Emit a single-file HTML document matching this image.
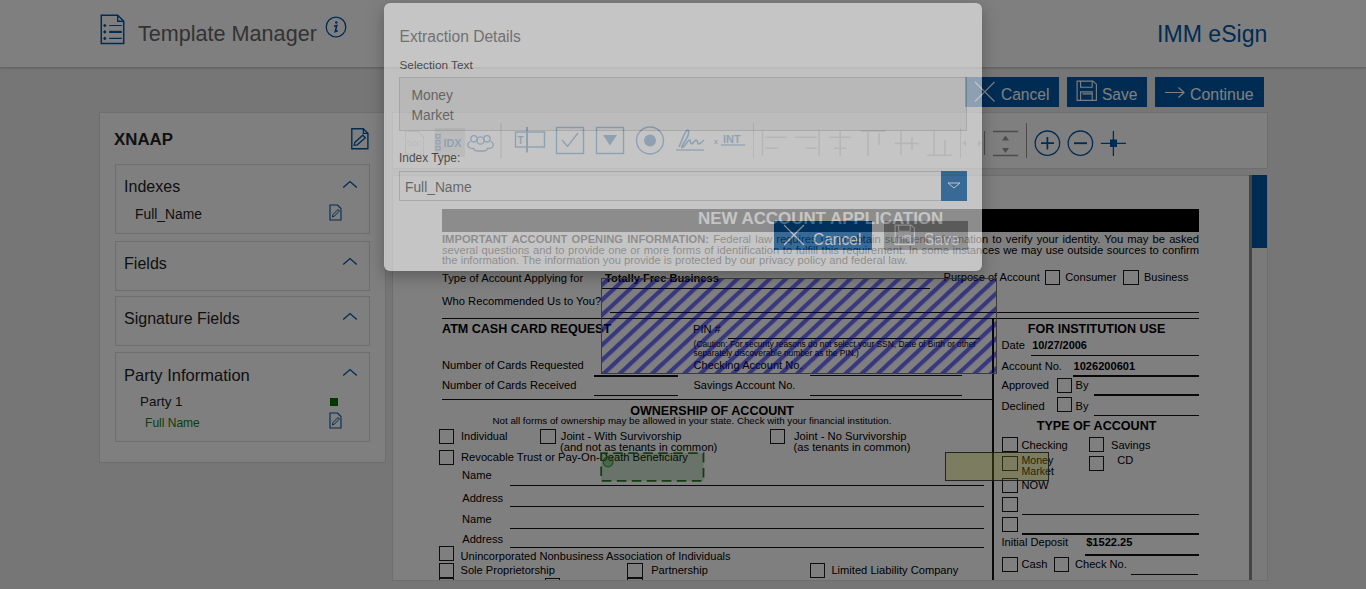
<!DOCTYPE html>
<html><head><meta charset="utf-8">
<style>
*{margin:0;padding:0;box-sizing:border-box}
html,body{width:1366px;height:589px;overflow:hidden}
body{background:#ececec;font-family:"Liberation Sans",sans-serif;position:relative}
.t{position:absolute;white-space:nowrap;line-height:1}
.r{position:absolute}
.jl{text-align:justify;text-align-last:justify;white-space:normal}
#hdr{position:absolute;left:0;top:0;width:1366px;height:67px;background:#fff;box-shadow:0 1px 2px rgba(0,0,0,.12),0 2px 1px rgba(0,0,0,.05)}
.btn{position:absolute;top:77px;height:30px;background:#0058a8}
#panel{position:absolute;left:98.6px;top:112px;width:287px;height:351px;background:#fff;border:1px solid #ddd}
.sec{position:absolute;left:15px;width:255px;border:1px solid #ddd;background:#fff}
#tb{position:absolute;left:391.5px;top:112px;width:876px;height:57px;background:#fff;border:1px solid #ddd}
#viewer{position:absolute;left:391.5px;top:175px;width:876px;height:406px;background:#fff;border:1px solid #ddd;overflow:hidden}
#doc{position:absolute;left:0;top:0;width:1366px;height:589px}
#backdrop{position:absolute;left:0;top:0;width:1366px;height:589px;background:#000;opacity:.5}
#modal{position:absolute;left:384px;top:3px;width:598px;height:267.6px;background:#fff;border-radius:6px;box-shadow:0 5px 15px rgba(0,0,0,.5);opacity:.55}
</style></head><body>
<div id="page">
  <div id="hdr">
    <svg class="r" style="left:100px;top:14px" width="26" height="32" viewBox="0 0 26 32">
      <path d="M1.3 1.3H17.7L23.7 7V29.6H1.3Z" fill="none" stroke="#0058a8" stroke-width="1.5"/>
      <path d="M17.7 1.3V7.3H23.7" fill="none" stroke="#0058a8" stroke-width="1.4"/>
      <path d="M4.8 9.7L6.6 11.5L4.8 13.3L3 11.5ZM4.8 16.1L6.6 17.9L4.8 19.7L3 17.9ZM4.8 22.6L6.6 24.4L4.8 26.2L3 24.4Z" fill="#0058a8"/>
      <path d="M9.2 11.5H21.8M9.2 24.4H21.8" stroke="#0058a8" stroke-width="1.2"/>
      <path d="M9.2 17.9H21.8" stroke="#0058a8" stroke-width="2.2"/>
    </svg>
    <div class="t" style="left:138px;top:23px;font-size:21.6px;color:#666">Template Manager</div>
    <svg class="r" style="left:325px;top:16px" width="22" height="22" viewBox="0 0 22 22">
      <circle cx="11" cy="11" r="9.8" fill="none" stroke="#0058a8" stroke-width="1.3"/>
      <circle cx="11.3" cy="6.5" r="1.2" fill="#0058a8"/>
      <path d="M9 10.2L11.8 9.6L10.2 15.5L12.8 14.8" fill="none" stroke="#0058a8" stroke-width="1.6"/>
    </svg>
    <div class="t" style="left:1157px;top:22.6px;font-size:23.1px;color:#0058a8">IMM eSign</div>
  </div>

  <div class="btn" style="left:965px;width:94px">
    <svg class="r" style="left:9.3px;top:3.6px" width="22" height="22" viewBox="0 0 22 22"><path d="M1 1L20.5 20.5M20.5 1L1 20.5" stroke="#fff" stroke-width="1.1"/></svg>
    <div class="t" style="left:35.5px;top:10.2px;font-size:16.9px;color:#fff;transform:scaleX(.92);transform-origin:0 0">Cancel</div>
  </div>
  <div class="btn" style="left:1067px;width:80px">
    <svg class="r" style="left:9px;top:3px" width="22" height="22" viewBox="0 0 22 22"><path d="M1.1 1.1H16.9L20.4 4.2V20.4H1.1Z M4.6 1.1V7.2H16.2V1.1 M4.6 20.4V11.9H16.2V20.4 M6.5 13.9H16.2" fill="none" stroke="#fff" stroke-width="1.1"/></svg>
    <div class="t" style="left:34.6px;top:10.2px;font-size:16.9px;color:#fff;transform:scaleX(.92);transform-origin:0 0">Save</div>
  </div>
  <div class="btn" style="left:1155px;width:109px">
    <svg class="r" style="left:9px;top:8px" width="22" height="14" viewBox="0 0 22 14"><path d="M1 7.5H20M14.5 2.5L20 7.5L14.5 12.5" fill="none" stroke="#fff" stroke-width="1.2"/></svg>
    <div class="t" style="left:35px;top:10.2px;font-size:16.9px;color:#fff;transform:scaleX(.94);transform-origin:0 0">Continue</div>
  </div>

  <div id="panel">
    <div class="t" style="left:14.5px;top:19px;font-size:16.8px;font-weight:700;color:#222">XNAAP</div>
    <svg class="r" style="left:250px;top:14px" width="20" height="24" viewBox="0 0 20 24">
      <path d="M1.8 1.7H13.3L17.9 6.3V21.7H1.8Z" fill="none" stroke="#0058a8" stroke-width="1.4"/>
      <path d="M13.3 1.7V6.3H17.9" fill="none" stroke="#0058a8" stroke-width="1.2"/>
      <path d="M4.2 18.3L4.8 15.4L12.8 8.2L15.3 10.7L7.3 17.8Z" fill="none" stroke="#0058a8" stroke-width="1.3"/>
    </svg>
    <div class="sec" style="top:51.4px;height:70px">
      <div class="t" style="left:8.5px;top:14px;font-size:16px;color:#222">Indexes</div>
      <svg class="r" style="left:226px;top:15px" width="16" height="9" viewBox="0 0 16 9"><path d="M1.2 7.6L8 1.6L14.8 7.6" fill="none" stroke="#0058a8" stroke-width="1.4"/></svg>
      <div class="t" style="left:19.5px;top:42.5px;font-size:13.8px;color:#222">Full_Name</div>
      <svg class="r" style="left:213.5px;top:39px" width="13" height="17" viewBox="0 0 13 17">
        <path d="M1 1H8.5L12 4.5V16H1Z" fill="none" stroke="#0058a8" stroke-width="1.1"/>
        <path d="M3.5 13L4 10.5L9 5.5L10.5 7L5.5 12Z" fill="none" stroke="#0058a8" stroke-width="1"/>
      </svg>
    </div>
    <div class="sec" style="top:128px;height:49.5px">
      <div class="t" style="left:8.5px;top:14px;font-size:16px;color:#222">Fields</div>
      <svg class="r" style="left:226px;top:15px" width="16" height="9" viewBox="0 0 16 9"><path d="M1.2 7.6L8 1.6L14.8 7.6" fill="none" stroke="#0058a8" stroke-width="1.4"/></svg>
    </div>
    <div class="sec" style="top:183px;height:50px">
      <div class="t" style="left:8.5px;top:14px;font-size:16px;color:#222">Signature Fields</div>
      <svg class="r" style="left:226px;top:15px" width="16" height="9" viewBox="0 0 16 9"><path d="M1.2 7.6L8 1.6L14.8 7.6" fill="none" stroke="#0058a8" stroke-width="1.4"/></svg>
    </div>
    <div class="sec" style="top:239.4px;height:89.8px">
      <div class="t" style="left:8.5px;top:13.5px;font-size:16.5px;color:#222">Party Information</div>
      <svg class="r" style="left:226px;top:15px" width="16" height="9" viewBox="0 0 16 9"><path d="M1.2 7.6L8 1.6L14.8 7.6" fill="none" stroke="#0058a8" stroke-width="1.4"/></svg>
      <div class="t" style="left:24.5px;top:42px;font-size:13.4px;color:#222">Party 1</div>
      <div class="r" style="left:214px;top:44.3px;width:8px;height:8px;background:#007000"></div>
      <div class="t" style="left:29.5px;top:63.5px;font-size:12px;color:#108010">Full Name</div>
      <svg class="r" style="left:213.5px;top:59px" width="13" height="17" viewBox="0 0 13 17">
        <path d="M1 1H8.5L12 4.5V16H1Z" fill="none" stroke="#0058a8" stroke-width="1.1"/>
        <path d="M3.5 13L4 10.5L9 5.5L10.5 7L5.5 12Z" fill="none" stroke="#0058a8" stroke-width="1"/>
      </svg>
    </div>
  </div>

  <div id="tb"></div>
  <svg class="r" style="left:392px;top:112px" width="876" height="57" viewBox="392 112 876 57">
    <!-- doc icon (disabled) -->
    <path d="M405.5 131.5H418L423.5 137V154.5H405.5Z" fill="none" stroke="#c8c8c8" stroke-width="1.1"/>
    <text x="407" y="146" font-family="Liberation Sans" font-size="6.5" fill="#c8c8c8">DOC</text>
    <rect x="434.5" y="128" width="30.5" height="29" fill="#d2d2d2"/>
    <rect x="436" y="134.5" width="4" height="3.5" fill="none" stroke="#0b5cb0" stroke-width="1.2"/>
    <rect x="436" y="140.5" width="4" height="3.5" fill="none" stroke="#0b5cb0" stroke-width="1.2"/>
    <rect x="436" y="146.5" width="4" height="3.5" fill="none" stroke="#0b5cb0" stroke-width="1.2"/>
    <text x="443.5" y="147.3" font-family="Liberation Sans" font-weight="700" font-size="10.8" fill="#0b5cb0">IDX</text>
    <g fill="none" stroke="#0b5cb0" stroke-width="1.3">
      <circle cx="474" cy="138.8" r="3.2"/><circle cx="487" cy="138.8" r="3.2"/><circle cx="480.5" cy="140.5" r="3.6"/>
      <path d="M470.5 141.5C467.5 142.5 467 145 468.5 147C469.5 148.5 472 148.5 473.5 148.5C474 150.5 476 151 478 151H483C485 151 487 150.5 487.5 148.5C489 148.5 491.5 148.5 492.5 147C494 145 493.5 142.5 490.5 141.5"/>
    </g>
    <path d="M501 123V158" stroke="#aaa" stroke-width="1.2"/>
    <g fill="none" stroke="#0b5cb0" stroke-width="1.4">
      <rect x="515.5" y="132" width="29" height="15"/>
      <path d="M527 127V152.5" stroke-width="2"/>
      <rect x="556.5" y="127.5" width="27" height="26"/>
      <path d="M562 140L567.5 146.5L578 133"/>
      <rect x="596.5" y="127.5" width="27" height="26"/>
      <circle cx="650" cy="140.5" r="13.5"/>
    </g>
    <text x="517.5" y="144" font-family="Liberation Sans" font-weight="700" font-size="10" fill="#0b5cb0">T</text>
    <path d="M603 135H617L610 145.5Z" fill="#0b5cb0"/>
    <circle cx="650" cy="140.5" r="6" fill="#0b5cb0"/>
    <path d="M679 147C682 140 684.5 132 687 130.5C689.5 129 689.5 134 686 139.5C683.5 143.5 681 147 682 147.5C684.5 147.5 687 141 689.5 140C691 139.5 690 144 691.5 144C693 144 695 139.5 696.5 140C698 140.5 697 144 698.5 144C700 144 702.5 141.5 704 140" fill="none" stroke="#0b5cb0" stroke-width="1.6"/>
    <path d="M676 150H704" stroke="#0b5cb0" stroke-width="1.3"/>
    <text x="714" y="143.8" font-family="Liberation Sans" font-weight="700" font-size="7" fill="#0b5cb0">x</text>
    <text x="723" y="142.5" font-family="Liberation Sans" font-weight="700" font-size="11" fill="#0b5cb0">INT</text>
    <path d="M721 145H745" stroke="#0b5cb0" stroke-width="1.2"/>
    <path d="M753.5 123V158" stroke="#bbb" stroke-width="1"/>
    <g stroke="#bdbdbd" stroke-width="1.6" fill="none">
      <path d="M762.5 131V156M765 137.3H787M765 148.3H778"/>
      <path d="M819.2 131V156M795 137.3H817M805 148.3H817"/>
      <path d="M840.2 131V156M829 137.3H851M834 148.3H846"/>
      <path d="M860.7 131.1H885.8M868 131V156M879 133V145"/>
      <path d="M894.6 143.4H918.4M901 131V155M912 137V150"/>
      <path d="M927.2 155.3H951.9M934 131V155M945 140V155"/>
      <path d="M960.5 128V158" stroke-width="1.2"/>
      <path d="M966 140L962.5 143.2L966 146.5ZM978 140L981.5 143.2L978 146.5Z" fill="#bdbdbd" stroke="none"/>
      <path d="M984.5 131V155" stroke="#999" stroke-width="1.2"/>
      <path d="M993 131.5H1018M993 155.5H1018" stroke="#999" stroke-width="1.3"/>
      <path d="M1005.5 135.5L1002 140.5H1009ZM1005.5 153L1002 148H1009Z" fill="#999" stroke="none"/>
    </g>
    <path d="M1026.5 123V158" stroke="#999" stroke-width="1"/>
    <g fill="none" stroke="#0058a8" stroke-width="1.3">
      <circle cx="1047.4" cy="143.2" r="12.2"/>
      <path d="M1041 143.2H1054M1047.4 137V149.5" stroke-width="1.7"/>
      <circle cx="1080.4" cy="143.2" r="12.2"/>
      <path d="M1074 143.2H1087" stroke-width="1.9"/>
      <path d="M1100.8 143.3H1126M1113.4 131V156"/>
    </g>
    <rect x="1110" y="139.5" width="7" height="7.5" fill="#0058a8"/>
  </svg>

  <div id="viewer"></div>
  <div class="r" style="left:1249px;top:175px;width:3px;height:405px;background:#8a8a8a"></div>
  <div class="r" style="left:1252px;top:175px;width:15px;height:405px;background:#f4f4f4"></div>
  <div class="r" style="left:1252px;top:175px;width:15px;height:73px;background:#0058a8"></div>
  <div id="doc" style="clip-path:inset(175px 117px 9px 393px)">
<div class="r" style="left:442.0px;top:208.8px;width:757.0px;height:23.0px;background:#000"></div>
<div class="t" style="left:698.0px;top:211.30px;font-size:16.9px;font-weight:700;color:#fff;">NEW ACCOUNT APPLICATION</div>
<div class="t jl" style="left:442px;top:234.22px;width:757px;font-size:11.2px;"><b>IMPORTANT ACCOUNT OPENING INFORMATION:</b> Federal law requires us to obtain sufficient information to verify your identity. You may be asked</div>
<div class="t jl" style="left:442px;top:244.82px;width:757px;font-size:11.2px;">several questions and to provide one or more forms of identification to fulfill this requirement. In some instances we may use outside sources to confirm</div>
<div class="t" style="left:442.0px;top:255.12px;font-size:11.2px;font-weight:400;color:#000;">the information. The information you provide is protected by our privacy policy and federal law.</div>
<div class="t" style="left:442.0px;top:272.52px;font-size:11.2px;font-weight:400;color:#000;">Type of Account Applying for</div>
<div class="t" style="left:605.0px;top:272.60px;font-size:11.1px;font-weight:700;color:#000;">Totally Free Business</div>
<div class="r" style="left:602.0px;top:287.5px;width:328.0px;height:1.2px;background:#111"></div>
<div class="t" style="left:943.5px;top:272.30px;font-size:11.1px;font-weight:400;color:#000;">Purpose of Account</div>
<div class="r" style="left:1044.6px;top:270.2px;width:15.2px;height:15.0px;border:1.6px solid #1a1a1a;box-sizing:border-box"></div>
<div class="t" style="left:1065.3px;top:272.30px;font-size:11.1px;font-weight:400;color:#000;">Consumer</div>
<div class="r" style="left:1123.4px;top:270.2px;width:15.2px;height:15.0px;border:1.6px solid #1a1a1a;box-sizing:border-box"></div>
<div class="t" style="left:1144.0px;top:272.43px;font-size:10.95px;font-weight:400;color:#000;">Business</div>
<div class="t" style="left:442.0px;top:296.12px;font-size:11.2px;font-weight:400;color:#000;">Who Recommended Us to You?</div>
<div class="r" style="left:610.0px;top:311.8px;width:589.0px;height:1.2px;background:#111"></div>
<div class="r" style="left:442.0px;top:317.5px;width:757.0px;height:1.4px;background:#111"></div>
<div class="t" style="left:442.0px;top:323.38px;font-size:12.55px;font-weight:700;color:#000;">ATM CASH CARD REQUEST</div>
<div class="t" style="left:693.0px;top:324.10px;font-size:11.1px;font-weight:400;color:#000;">PIN #</div>
<div class="r" style="left:728.0px;top:338.0px;width:252.0px;height:1.2px;background:#111"></div>
<div class="t" style="left:693.6px;top:339.69px;font-size:8.4px;font-weight:400;color:#000;">(Caution: For security reasons do not select your SSN, Date of Birth or other</div>
<div class="t" style="left:693.6px;top:348.99px;font-size:8.4px;font-weight:400;color:#000;">separately discoverable number as the PIN.)</div>
<div class="t" style="left:693.5px;top:360.12px;font-size:11.08px;font-weight:400;color:#000;">Checking Account No.</div>
<div class="r" style="left:809.5px;top:374.8px;width:152.8px;height:1.6px;background:#111"></div>
<div class="t" style="left:442.0px;top:359.56px;font-size:11.15px;font-weight:400;color:#000;">Number of Cards Requested</div>
<div class="r" style="left:594.0px;top:375.2px;width:84.0px;height:1.6px;background:#111"></div>
<div class="t" style="left:442.0px;top:380.06px;font-size:11.15px;font-weight:400;color:#000;">Number of Cards Received</div>
<div class="r" style="left:594.0px;top:394.9px;width:84.0px;height:1.6px;background:#111"></div>
<div class="t" style="left:693.5px;top:379.85px;font-size:11.05px;font-weight:400;color:#000;">Savings Account No.</div>
<div class="r" style="left:809.5px;top:394.9px;width:152.8px;height:1.6px;background:#111"></div>
<div class="r" style="left:442.0px;top:399.1px;width:551.0px;height:1.4px;background:#111"></div>
<div class="r" style="left:992.2px;top:318.0px;width:1.6px;height:262.0px;background:#111"></div>
<div class="t" style="left:1027.8px;top:322.72px;font-size:12.5px;font-weight:700;color:#000;">FOR INSTITUTION USE</div>
<div class="t" style="left:1001.5px;top:340.20px;font-size:11.1px;font-weight:400;color:#000;">Date</div>
<div class="t" style="left:1032.2px;top:340.33px;font-size:10.95px;font-weight:700;color:#000;">10/27/2006</div>
<div class="r" style="left:1030.5px;top:355.3px;width:168.5px;height:1.2px;background:#111"></div>
<div class="t" style="left:1001.5px;top:360.60px;font-size:11.1px;font-weight:400;color:#000;">Account No.</div>
<div class="t" style="left:1073.5px;top:360.62px;font-size:11.08px;font-weight:700;color:#000;">1026200601</div>
<div class="r" style="left:1072.6px;top:375.4px;width:126.4px;height:1.2px;background:#111"></div>
<div class="t" style="left:1001.5px;top:380.40px;font-size:11.1px;font-weight:400;color:#000;">Approved</div>
<div class="r" style="left:1056.8px;top:378.0px;width:15.2px;height:15.0px;border:1.6px solid #1a1a1a;box-sizing:border-box"></div>
<div class="t" style="left:1075.5px;top:380.40px;font-size:11.1px;font-weight:400;color:#000;">By</div>
<div class="r" style="left:1093.8px;top:394.4px;width:105.2px;height:1.2px;background:#111"></div>
<div class="t" style="left:1001.5px;top:400.60px;font-size:11.1px;font-weight:400;color:#000;">Declined</div>
<div class="r" style="left:1056.8px;top:396.6px;width:15.2px;height:15.0px;border:1.6px solid #1a1a1a;box-sizing:border-box"></div>
<div class="t" style="left:1075.5px;top:400.60px;font-size:11.1px;font-weight:400;color:#000;">By</div>
<div class="r" style="left:1094.0px;top:415.0px;width:105.0px;height:1.2px;background:#111"></div>
<div class="t" style="left:630.2px;top:404.77px;font-size:12.56px;font-weight:700;color:#000;">OWNERSHIP OF ACCOUNT</div>
<div class="t" style="left:492.5px;top:416.15px;font-size:9.75px;font-weight:400;color:#000;">Not all forms of ownership may be allowed in your state. Check with your financial institution.</div>
<div class="r" style="left:439.2px;top:428.6px;width:15.2px;height:15.0px;border:1.6px solid #1a1a1a;box-sizing:border-box"></div>
<div class="t" style="left:461.0px;top:430.69px;font-size:11.0px;font-weight:400;color:#000;">Individual</div>
<div class="r" style="left:540.4px;top:428.6px;width:15.2px;height:15.0px;border:1.6px solid #1a1a1a;box-sizing:border-box"></div>
<div class="t" style="left:560.8px;top:430.52px;font-size:11.2px;font-weight:400;color:#000;">Joint - With Survivorship</div>
<div class="t" style="left:560.0px;top:441.52px;font-size:11.2px;font-weight:400;color:#000;">(and not as tenants in common)</div>
<div class="r" style="left:770.3px;top:428.6px;width:15.2px;height:15.0px;border:1.6px solid #1a1a1a;box-sizing:border-box"></div>
<div class="t" style="left:794.0px;top:430.52px;font-size:11.2px;font-weight:400;color:#000;">Joint - No Survivorship</div>
<div class="t" style="left:793.5px;top:441.52px;font-size:11.2px;font-weight:400;color:#000;">(as tenants in common)</div>
<div class="r" style="left:439.2px;top:449.5px;width:15.2px;height:15.0px;border:1.6px solid #1a1a1a;box-sizing:border-box"></div>
<div class="t" style="left:461.0px;top:451.52px;font-size:11.2px;font-weight:400;color:#000;">Revocable Trust or Pay-On-Death Beneficiary</div>
<div class="t" style="left:462.0px;top:470.20px;font-size:11.1px;font-weight:400;color:#000;">Name</div>
<div class="r" style="left:509.7px;top:485.0px;width:474.3px;height:1.2px;background:#111"></div>
<div class="t" style="left:462.3px;top:493.20px;font-size:11.1px;font-weight:400;color:#000;">Address</div>
<div class="r" style="left:509.7px;top:506.2px;width:474.3px;height:1.2px;background:#111"></div>
<div class="t" style="left:462.0px;top:513.50px;font-size:11.1px;font-weight:400;color:#000;">Name</div>
<div class="r" style="left:509.7px;top:527.6px;width:474.3px;height:1.2px;background:#111"></div>
<div class="t" style="left:462.3px;top:534.00px;font-size:11.1px;font-weight:400;color:#000;">Address</div>
<div class="r" style="left:509.7px;top:547.3px;width:474.3px;height:1.2px;background:#111"></div>
<div class="r" style="left:439.2px;top:546.2px;width:15.2px;height:15.0px;border:1.6px solid #1a1a1a;box-sizing:border-box"></div>
<div class="t" style="left:460.5px;top:551.20px;font-size:11.1px;font-weight:400;color:#000;">Unincorporated Nonbusiness Association of Individuals</div>
<div class="r" style="left:439.2px;top:562.9px;width:15.2px;height:15.0px;border:1.6px solid #1a1a1a;box-sizing:border-box"></div>
<div class="t" style="left:460.5px;top:564.60px;font-size:11.1px;font-weight:400;color:#000;">Sole Proprietorship</div>
<div class="r" style="left:627.4px;top:562.9px;width:15.2px;height:15.0px;border:1.6px solid #1a1a1a;box-sizing:border-box"></div>
<div class="t" style="left:651.2px;top:564.60px;font-size:11.1px;font-weight:400;color:#000;">Partnership</div>
<div class="r" style="left:809.5px;top:562.6px;width:15.2px;height:15.0px;border:1.6px solid #1a1a1a;box-sizing:border-box"></div>
<div class="t" style="left:831.4px;top:564.56px;font-size:11.15px;font-weight:400;color:#000;">Limited Liability Company</div>
<div class="r" style="left:439.2px;top:577.5px;width:15.2px;height:15.0px;border:1.6px solid #1a1a1a;box-sizing:border-box"></div>
<div class="r" style="left:545.0px;top:577.5px;width:15.2px;height:15.0px;border:1.6px solid #1a1a1a;box-sizing:border-box"></div>
<div class="r" style="left:627.4px;top:577.5px;width:15.2px;height:15.0px;border:1.6px solid #1a1a1a;box-sizing:border-box"></div>
<div class="t" style="left:1036.8px;top:419.76px;font-size:12.57px;font-weight:700;color:#000;">TYPE OF ACCOUNT</div>
<div class="r" style="left:1002.4px;top:437.4px;width:15.2px;height:15.0px;border:1.6px solid #1a1a1a;box-sizing:border-box"></div>
<div class="t" style="left:1021.5px;top:440.10px;font-size:11.1px;font-weight:400;color:#000;">Checking</div>
<div class="r" style="left:1088.7px;top:437.4px;width:15.2px;height:15.0px;border:1.6px solid #1a1a1a;box-sizing:border-box"></div>
<div class="t" style="left:1111.0px;top:439.60px;font-size:11.1px;font-weight:400;color:#000;">Savings</div>
<div class="r" style="left:1002.4px;top:455.6px;width:15.2px;height:15.0px;border:1.6px solid #1a1a1a;box-sizing:border-box"></div>
<div class="t" style="left:1021.5px;top:455.03px;font-size:10.6px;font-weight:400;color:#000;">Money</div>
<div class="t" style="left:1021.5px;top:466.43px;font-size:10.6px;font-weight:400;color:#000;">Market</div>
<div class="r" style="left:1088.7px;top:455.6px;width:15.2px;height:15.0px;border:1.6px solid #1a1a1a;box-sizing:border-box"></div>
<div class="t" style="left:1117.2px;top:454.60px;font-size:11.1px;font-weight:400;color:#000;">CD</div>
<div class="r" style="left:1002.4px;top:478.2px;width:15.2px;height:15.0px;border:1.6px solid #1a1a1a;box-sizing:border-box"></div>
<div class="t" style="left:1021.5px;top:480.30px;font-size:11.1px;font-weight:400;color:#000;">NOW</div>
<div class="r" style="left:1002.4px;top:497.3px;width:15.2px;height:15.0px;border:1.6px solid #1a1a1a;box-sizing:border-box"></div>
<div class="r" style="left:1022.0px;top:513.6px;width:176.5px;height:1.3px;background:#111"></div>
<div class="r" style="left:1002.4px;top:517.0px;width:15.2px;height:15.0px;border:1.6px solid #1a1a1a;box-sizing:border-box"></div>
<div class="r" style="left:1022.0px;top:533.4px;width:176.5px;height:1.3px;background:#111"></div>
<div class="t" style="left:1001.5px;top:537.40px;font-size:11.1px;font-weight:400;color:#000;">Initial Deposit</div>
<div class="t" style="left:1086.2px;top:537.40px;font-size:11.1px;font-weight:700;color:#000;">$1522.25</div>
<div class="r" style="left:1085.0px;top:554.4px;width:113.5px;height:1.3px;background:#111"></div>
<div class="r" style="left:1002.4px;top:557.2px;width:15.2px;height:15.0px;border:1.6px solid #1a1a1a;box-sizing:border-box"></div>
<div class="t" style="left:1021.5px;top:558.60px;font-size:11.1px;font-weight:400;color:#000;">Cash</div>
<div class="r" style="left:1054.0px;top:557.2px;width:15.2px;height:15.0px;border:1.6px solid #1a1a1a;box-sizing:border-box"></div>
<div class="t" style="left:1075.0px;top:558.60px;font-size:11.1px;font-weight:400;color:#000;">Check No.</div>
<div class="r" style="left:1131.3px;top:573.6px;width:67.2px;height:1.3px;background:#111"></div>
<svg class="r" style="left:601px;top:278px" width="396" height="96"><defs><pattern id="hp" width="11" height="40" patternUnits="userSpaceOnUse" patternTransform="translate(5.4 0) rotate(47)"><rect x="0" y="0" width="4.2" height="40" fill="rgba(0,0,255,.56)"/></pattern></defs><rect x="0" y="0" width="396" height="96" fill="url(#hp)"/><rect x="0.5" y="0.5" width="395" height="95" fill="none" stroke="#777" stroke-width="1"/></svg>
<svg class="r" style="left:600px;top:452px" width="105" height="30"><rect x="1.2" y="1.2" width="102.3" height="27.6" fill="rgba(30,130,30,.2)" stroke="#2a7a2a" stroke-width="1.8" stroke-dasharray="9.6 5.4" stroke-dashoffset="3"/><circle cx="8.1" cy="9.8" r="5" fill="rgba(40,150,40,.35)" stroke="rgba(40,150,40,.8)" stroke-width="1.2"/></svg>
<div class="r" style="left:945.2px;top:452.4px;width:103.4px;height:28.9px;border:1.8px solid rgba(40,40,40,.85);background:rgba(235,235,50,.3)"></div>
  </div>
</div>
<div id="backdrop"></div>
<div id="modal">
  <div class="t" style="left:15.5px;top:25.6px;font-size:15.6px;color:#666">Extraction Details</div>
  <div class="t" style="left:15.5px;top:57.2px;font-size:11.8px;color:#222">Selection Text</div>
  <div class="r" style="left:15px;top:74px;width:568px;height:54px;background:#eee;border:1px solid #ccc"></div>
  <div class="t" style="left:27.5px;top:85.8px;font-size:13.8px;color:#555">Money</div>
  <div class="t" style="left:27.5px;top:105.7px;font-size:13.8px;color:#555">Market</div>
  <div class="t" style="left:15px;top:150.2px;font-size:11.9px;color:#222">Index Type:</div>
  <div class="r" style="left:15px;top:168px;width:568px;height:29.5px;background:#fff;border:1px solid #ccc"></div>
  <div class="r" style="left:557px;top:167.5px;width:26px;height:30px;background:#0058a8"></div>
  <svg class="r" style="left:563px;top:179px" width="14" height="7" viewBox="0 0 14 7"><path d="M1 1H13L7 6Z" fill="none" stroke="#fff" stroke-width="1"/></svg>
  <div class="t" style="left:21px;top:178.3px;font-size:13.8px;color:#555">Full_Name</div>
  <div class="r" style="left:390px;top:217.5px;width:98px;height:29.5px;background:#0058a8"></div>
  <svg class="r" style="left:399px;top:221px" width="22" height="22" viewBox="0 0 22 22"><path d="M1 1L21 21M21 1L1 21" stroke="#fff" stroke-width="1.2"/></svg>
  <div class="t" style="left:428.5px;top:228.5px;font-size:16.9px;color:#fff;transform:scaleX(.92);transform-origin:0 0">Cancel</div>
  <div class="r" style="left:500px;top:217.5px;width:84px;height:29.5px;background:#a5a5a5"></div>
  <svg class="r" style="left:509.5px;top:221px" width="22" height="22" viewBox="0 0 22 22"><path d="M1.1 1.1H16.9L20.4 4.2V20.4H1.1Z M4.6 1.1V7.2H16.2V1.1 M4.6 20.4V11.9H16.2V20.4 M6.5 13.9H16.2" fill="none" stroke="#fff" stroke-width="1.1"/></svg>
  <div class="t" style="left:539.5px;top:228.7px;font-size:16.9px;color:#fff;transform:scaleX(.92);transform-origin:0 0">Save</div>
</div>
</body></html>
